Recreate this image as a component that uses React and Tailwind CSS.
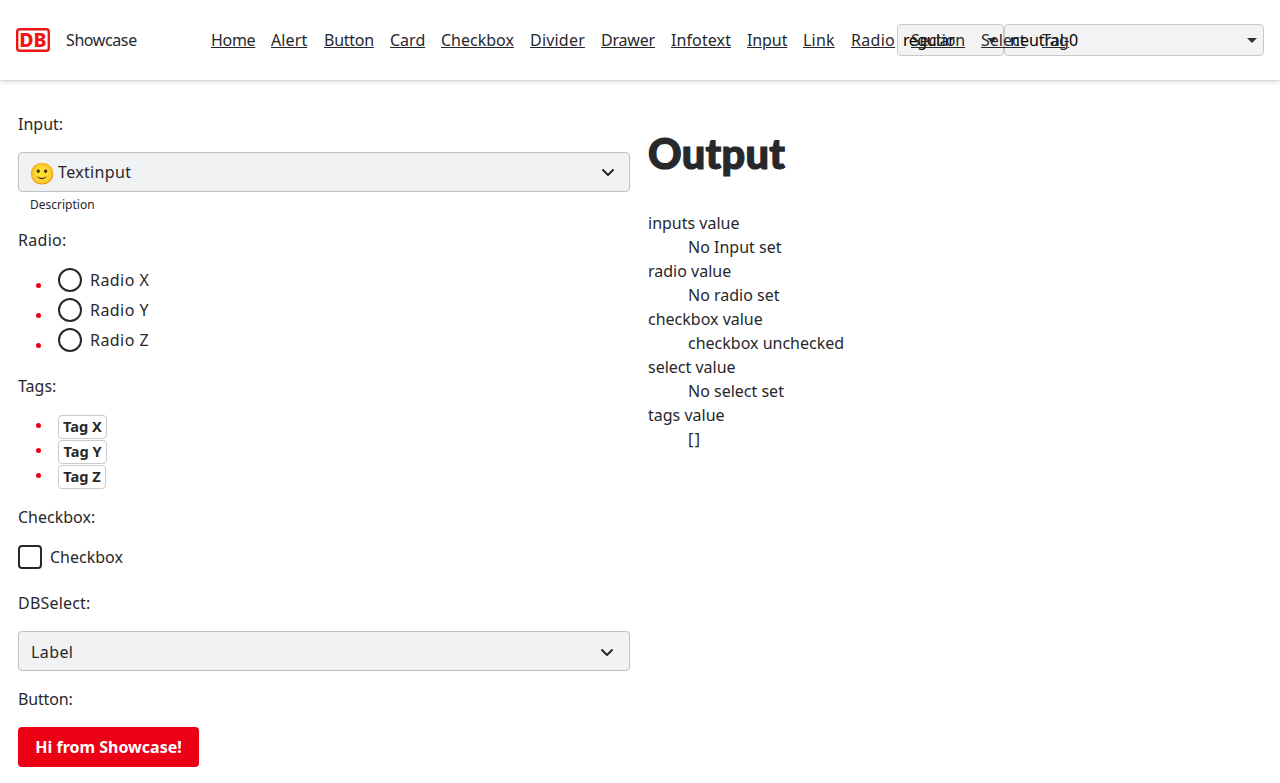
import React from "react";

const links = [
  ["Home", "w-11 tracking-[-0.3px]"],
  ["Alert", "w-[37px] tracking-[0.1px]"],
  ["Button", "w-[50px] tracking-[-0.25px]"],
  ["Card", "w-[35px]"],
  ["Checkbox", "w-[73px]"],
  ["Divider", "w-[55px] tracking-[0.2px]"],
  ["Drawer", "w-[54px] tracking-[-0.2px]"],
  ["Infotext", "w-[60px] tracking-[0.1px]"],
  ["Input", "w-10 tracking-[-0.1px]"],
  ["Link", "w-8 tracking-[0.2px]"],
  ["Radio", "w-11 tracking-[0.3px]"],
  ["Section", "w-[54px] tracking-[-0.15px]"],
  ["Select", "w-[45px]"],
  ["Tag", "w-[27px] tracking-[0.2px]"],
];

const output = [
  ["inputs value", "No Input set"],
  ["radio value", "No radio set"],
  ["checkbox value", "checkbox unchecked"],
  ["select value", "No select set"],
  ["tags value", "[]"],
];

function Logo() {
  return (
    <svg className="block h-6 w-[34px] shrink-0 overflow-visible" viewBox="0 0 34 24">
      <rect x="1.2" y="1.2" width="31.6" height="21.6" rx="2.6" fill="#fff" stroke="#f01414" strokeWidth="2.4" />
      <text x="3.2" y="19" textLength="27.4" lengthAdjust="spacingAndGlyphs" fill="#f01414" fontSize="19.5" fontWeight="800" fontFamily="Noto Sans, sans-serif">DB</text>
    </svg>
  );
}

function Chevron({ className }) {
  return (
    <svg className={className} viewBox="0 0 24 24" fill="none" stroke="#27282b" strokeWidth="2" strokeLinecap="round" strokeLinejoin="round">
      <path d="M7 10l5 5 5-5" />
    </svg>
  );
}

function HeaderSelect({ label, className }) {
  return (
    <div className={`flex h-8 shrink-0 items-center justify-between rounded-[4px] border border-[#c8c8c8] bg-[#f3f3f3] pl-[5px] pr-1.5 text-black ${className}`}>
      <span>{label}</span>
      <svg className="h-[5px] w-2.5" viewBox="0 0 10 5">
        <path d="M0 0h10L5 5z" fill="#2e3436" />
      </svg>
    </div>
  );
}

function Bullet({ className }) {
  return (
    <span className={`flex w-10 shrink-0 justify-center ${className}`}>
      <span className="h-[5px] w-[5px] rounded-full bg-[#ec0016]" />
    </span>
  );
}

export default function App() {
  return (
    <div className="h-[783px] overflow-hidden bg-white font-['Noto_Sans',sans-serif] text-base leading-6 text-[#27282b]">
      <header className="flex h-20 items-center bg-white px-4 shadow-[0_0_1px_rgba(0,0,0,0.28),0_1px_6px_rgba(0,0,0,0.18)]">
        <Logo />
        <span className="ml-4 w-[145px] shrink-0 tracking-[-0.4px]">Showcase</span>
        <nav className="relative z-10 flex w-[686px] shrink-0 gap-4 whitespace-nowrap">
          {links.map(([name, cls]) => (
            <a key={name} className={`block h-6 shrink-0 underline decoration-1 underline-offset-1 ${cls}`}>{name}</a>
          ))}
        </nav>
        <HeaderSelect label="regular" className="w-[107px] tracking-[-0.5px]" />
        <HeaderSelect label="neutral-0" className="w-[260px]" />
      </header>

      <main className="flex gap-[18px] pl-[18px] pt-8">
        <section className="w-[612px] shrink-0">
          <p>Input:</p>
          <div className="mt-4 flex h-10 items-center rounded-[4px] border border-[#bfc0c6] bg-[#f1f2f4] pl-2.5 pr-[9px]">
            <span className="w-[29px] pt-px text-[21px] leading-6">🙂</span>
            <span className="grow tracking-[0.35px]">Textinput</span>
            <Chevron className="h-6 w-6" />
          </div>
          <p className="ml-3 mt-1 h-4 pt-px text-xs leading-4">Description</p>
          <p className="mt-4 tracking-[0.3px]">Radio:</p>
          <ul className="mt-4 flex flex-col gap-1.5">
            {["X", "Y", "Z"].map((n) => (
              <li key={n} className="flex h-6 items-center">
                <Bullet className="pt-[11px]" />
                <span className="mr-2 h-6 w-6 rounded-full border-2 border-[#27282b]" />
                <span className="tracking-[0.45px]">Radio {n}</span>
              </li>
            ))}
          </ul>
          <p className="mt-[22px]">Tags:</p>
          <ul className="mt-[17px] flex flex-col gap-px">
            {[["X", "w-[49px]"], ["Y", "w-[49px]"], ["Z", "w-12"]].map(([n, w]) => (
              <li key={n} className="flex h-6 items-center">
                <Bullet className="pb-[3px]" />
                <span className={`flex h-6 items-center justify-center whitespace-nowrap rounded-[4px] border border-[#cacbce] pb-0.5 text-[14.6px] font-bold ${w}`}>Tag {n}</span>
              </li>
            ))}
          </ul>
          <p className="mt-4">Checkbox:</p>
          <div className="mt-4 flex h-6 items-center gap-2">
            <span className="h-6 w-6 rounded-[4px] border-2 border-[#27282b]" />
            <span>Checkbox</span>
          </div>
          <p className="mt-[22px] tracking-[0.2px]">DBSelect:</p>
          <div className="mt-4 flex h-10 items-center justify-between rounded-[4px] border border-[#bfc0c6] bg-[#f1f2f4] pl-3 pr-2.5 pt-0.5">
            <span className="tracking-[0.4px]">Label</span>
            <Chevron className="h-6 w-6" />
          </div>
          <p className="mt-4 tracking-[-0.15px]">Button:</p>
          <button className="mt-4 flex h-10 w-[181px] items-center justify-center whitespace-nowrap rounded-[4px] bg-[#ec0016] font-bold text-white">Hi from Showcase!</button>
        </section>

        <section>
          <h1 className="mt-[13px] h-[86px] font-['Lato',sans-serif] text-[41.5px] font-black leading-[56px] tracking-[0.3px] [-webkit-text-stroke:1.2px_#27282b]">Output</h1>
          <dl>
            {output.map(([k, v]) => (
              <React.Fragment key={k}>
                <dt>{k}</dt>
                <dd className="ml-10">{v === "[]" ? <span className="tracking-[1.5px]">[]</span> : v}</dd>
              </React.Fragment>
            ))}
          </dl>
        </section>
      </main>
    </div>
  );
}
